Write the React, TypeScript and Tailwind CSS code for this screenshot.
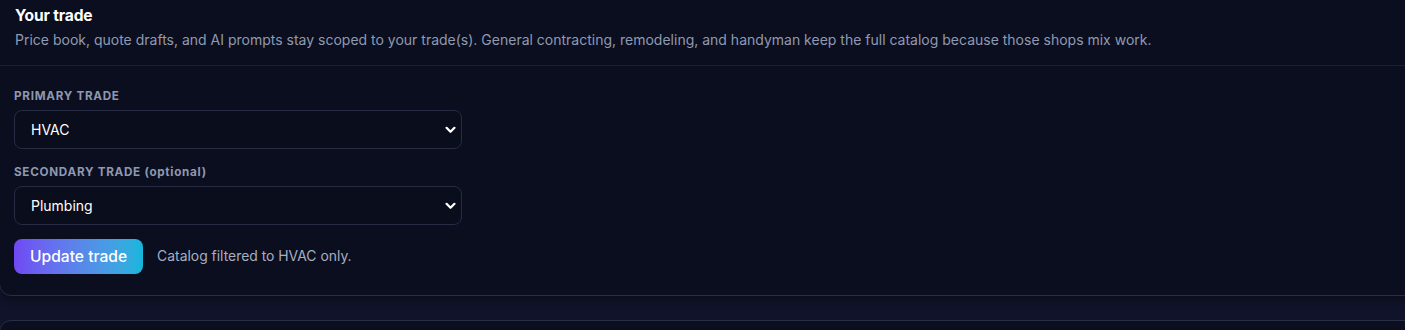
import React from 'react';

const Chevron = () => (
  <svg
    viewBox="0 0 12 8"
    className="pointer-events-none absolute right-[6px] top-1/2 h-[7px] w-[11px] -translate-y-1/2"
  >
    <path d="M1.5 1.5 L6 6 L10.5 1.5" fill="none" stroke="#ffffff" strokeWidth="2.6" strokeLinecap="round" strokeLinejoin="round" />
  </svg>
);

interface TradeSelectProps {
  label: React.ReactNode;
  value: string;
  options: string[];
}

const TradeSelect: React.FC<TradeSelectProps> = ({ label, value, options }) => (
  <div className="flex flex-col gap-[6px]">
    <label className="text-[11.7px] font-bold uppercase leading-[16px] tracking-[0.06em] text-[#8e98b0]">{label}</label>
    <div className="relative w-[448px]">
      <select
        defaultValue={value}
        className="h-[39px] w-full appearance-none rounded-lg border border-[#272b44] bg-[#0a0d1b] pl-[16px] text-[14px] text-white outline-none"
      >
        {options.map((o) => (
          <option key={o}>{o}</option>
        ))}
      </select>
      <Chevron />
    </div>
  </div>
);

const trades = ['HVAC', 'Plumbing', 'Electrical', 'Roofing', 'General contracting', 'Remodeling', 'Handyman'];

export default function App() {
  return (
    <div
      className="h-[330px] w-full overflow-hidden bg-[#11132a]"
      style={{ fontFamily: 'Inter, "Noto Sans", sans-serif' }}
    >
      {/* Trade card (scrolled, edges clipped) */}
      <div className="-ml-px -mr-[20px] -mt-[20px] rounded-xl border border-[#2a2d47] bg-[#0b0e1e] shadow-[0_4px_8px_rgba(0,0,0,0.35)]">
        <div className="border-b border-[#1c1f35] pb-[15px] pl-[15px] pt-[24px]">
          <h2 className="text-[15.6px] font-bold leading-[22px] tracking-[-0.01em] text-white">Your trade</h2>
          <p className="mt-[3px] text-[14px] leading-[20px] text-[#8f9ab2]">
            Price book, quote drafts, and AI prompts stay scoped to your trade(s). General contracting, remodeling, and
            handyman keep the full catalog because those shops mix work.
          </p>
        </div>
        <div className="flex flex-col gap-[15px] pb-[21px] pl-[14px] pt-[22px]">
          <TradeSelect label="Primary trade" value="HVAC" options={trades} />
          <TradeSelect
            label={
              <>
                Secondary trade <span className="normal-case">(optional)</span>
              </>
            }
            value="Plumbing"
            options={['None', ...trades]}
          />
          <div className="-mt-px flex items-center gap-[14px]">
            <button
              type="button"
              className="h-[35px] rounded-lg bg-gradient-to-r from-[#7048f4] to-[#12b6dc] px-[16px] text-[15.6px] font-medium text-white"
            >
              Update trade
            </button>
            <span className="text-[13.9px] text-[#a6afc2]">Catalog filtered to HVAC only.</span>
          </div>
        </div>
      </div>
      {/* Next card, top edge */}
      <div className="-ml-px -mr-[20px] mt-[24px] h-[40px] rounded-xl border border-[#2a2d47] bg-[#0b0e1e]" />
    </div>
  );
}
